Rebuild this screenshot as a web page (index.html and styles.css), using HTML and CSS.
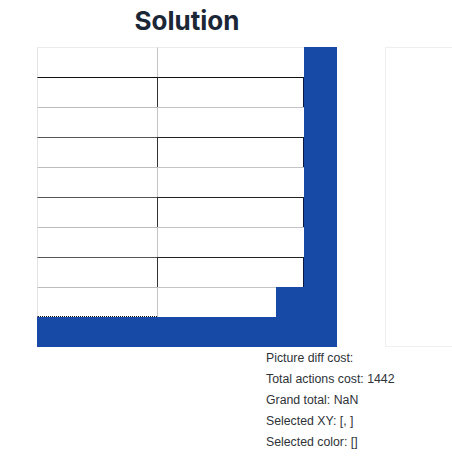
FILE: index.html
```html
<!DOCTYPE html>
<html lang="en">
<head>
    <meta charset="UTF-8">
    <meta name="viewport" content="width=device-width, initial-scale=1.0">
    <title>Solution</title>
    <link rel="stylesheet" href="styles.css">
</head>
<body>
    <div class="page">
        <h1 class="title">Solution</h1>
        <div class="board-row">
            <div class="board">
                <div class="row odd"><div class="cell left"></div><div class="cell right"></div></div>
                <div class="row even first-even"><div class="cell left"></div><div class="cell right"></div></div>
                <div class="row odd"><div class="cell left"></div><div class="cell right"></div></div>
                <div class="row even"><div class="cell left"></div><div class="cell right"></div></div>
                <div class="row odd"><div class="cell left"></div><div class="cell right"></div></div>
                <div class="row even"><div class="cell left"></div><div class="cell right"></div></div>
                <div class="row odd"><div class="cell left"></div><div class="cell right"></div></div>
                <div class="row even"><div class="cell left"></div><div class="cell right"></div></div>
                <div class="row odd last"><div class="cell left"></div><div class="cell right short"></div></div>
            </div>
            <div class="side-panel"></div>
        </div>
        <div class="stats">
            <div>Picture diff cost: </div>
            <div>Total actions cost: 1442</div>
            <div>Grand total: NaN</div>
            <div>Selected XY: [, ]</div>
            <div>Selected color: []</div>
        </div>
    </div>
</body>
</html>
```

FILE: styles.css
```css
:root {
    --board-blue: #174aa6;
    --title-color: #1b2636;
    --text-color: #2f3338;
}

* {
    margin: 0;
    padding: 0;
    box-sizing: border-box;
}

body {
    background-color: #fff;
    font-family: 'Inter', 'Liberation Sans', sans-serif;
    overflow: hidden;
}

.page {
    padding-top: 5px;
}

.title {
    width: 300px;
    margin-left: 37px;
    text-align: center;
    font-size: 26px;
    font-weight: 700;
    line-height: 32px;
    color: var(--title-color);
    margin-bottom: 10px;
}

.board-row {
    display: flex;
    gap: 48px;
    margin-left: 37px;
}

.board {
    width: 300px;
    height: 300px;
    flex-shrink: 0;
    background-color: var(--board-blue);
}

.row {
    display: flex;
    height: 30px;
}

.cell {
    height: 30px;
    background-color: #fff;
}

.cell.left {
    width: 120px;
    border-left: 1px solid #e4e4e4;
    border-top: 1px solid #bdbdbd;
}

.cell.right {
    width: 147px;
    border-left: 1px solid #c4c4c4;
    border-top: 1px solid #c4c4c4;
}

.row:first-child .cell {
    border-top-color: #ececec;
}

.row.even .cell.left {
    border-top-color: #555;
}

.row.even .cell.right {
    border-top: 1px solid #222;
    border-left-color: #333;
    border-right: 1px solid #0c1a40;
}

.row.first-even .cell.left,
.row.first-even .cell.right {
    border-top-color: #111;
}

.row.last .cell.left {
    border-bottom: 1px dotted #111;
}

.cell.right.short {
    width: 119px;
}

.side-panel {
    width: 67px;
    height: 300px;
    flex-shrink: 0;
    border: 1px solid #efefef;
    border-right: none;
}

.stats {
    padding-left: 266px;
    margin-top: 1px;
    font-family: 'Liberation Sans', sans-serif;
    font-size: 12.3px;
    line-height: 21px;
    color: var(--text-color);
}
```
